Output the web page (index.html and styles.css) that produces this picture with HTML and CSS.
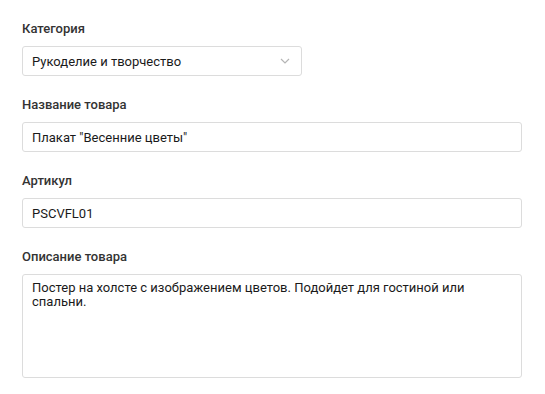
FILE: index.html
```html
<!DOCTYPE html>
<html lang="ru">
<head>
  <meta charset="UTF-8" />
  <title>Товар</title>
  <link rel="stylesheet" href="styles.css">
</head>
<body>
  <form class="product-form">
    <div class="field">
      <label class="field-label">Категория</label>
      <div class="select">
        <span>Рукоделие и творчество</span>
        <svg class="chevron" width="10" height="6" viewBox="0 0 10 6">
          <path d="M1 1 L5 5 L9 1" fill="none" stroke="#b5b5b5" stroke-width="1.2"/>
        </svg>
      </div>
    </div>

    <div class="field">
      <label class="field-label">Название товара</label>
      <input class="input" type="text" value='Плакат "Весенние цветы"'>
    </div>

    <div class="field">
      <label class="field-label">Артикул</label>
      <input class="input" type="text" value="PSCVFL01">
    </div>

    <div class="field">
      <label class="field-label">Описание товара</label>
      <textarea class="input textarea">Постер на холсте с изображением цветов. Подойдет для гостиной или спальни.</textarea>
    </div>
  </form>
</body>
</html>
```

FILE: styles.css
```css
* {
  margin: 0;
  padding: 0;
  box-sizing: border-box;
  font-family: 'Roboto', 'Noto Sans', sans-serif;
}
body {
  background: #fff;
  padding: 21px 23px 0 22px;
}
.product-form {
  display: flex;
  flex-direction: column;
  gap: 21px;
}
.field {
  display: flex;
  flex-direction: column;
  gap: 9px;
}
.field-label {
  font-size: 13px;
  line-height: 16px;
  font-weight: 500;
  color: #333;
}
.input, .select {
  width: 100%;
  height: 30px;
  border: 1px solid #dcdcdc;
  border-radius: 3px;
  padding: 0 9px;
  font-size: 13px;
  color: #1a1a1a;
  background: #fff;
  outline: none;
}
.select {
  width: 280px;
  display: flex;
  align-items: center;
  justify-content: space-between;
  padding-right: 11px;
}
.textarea {
  height: 104px;
  padding: 6px 50px 6px 9px;
  resize: none;
  line-height: 14px;
}
```
